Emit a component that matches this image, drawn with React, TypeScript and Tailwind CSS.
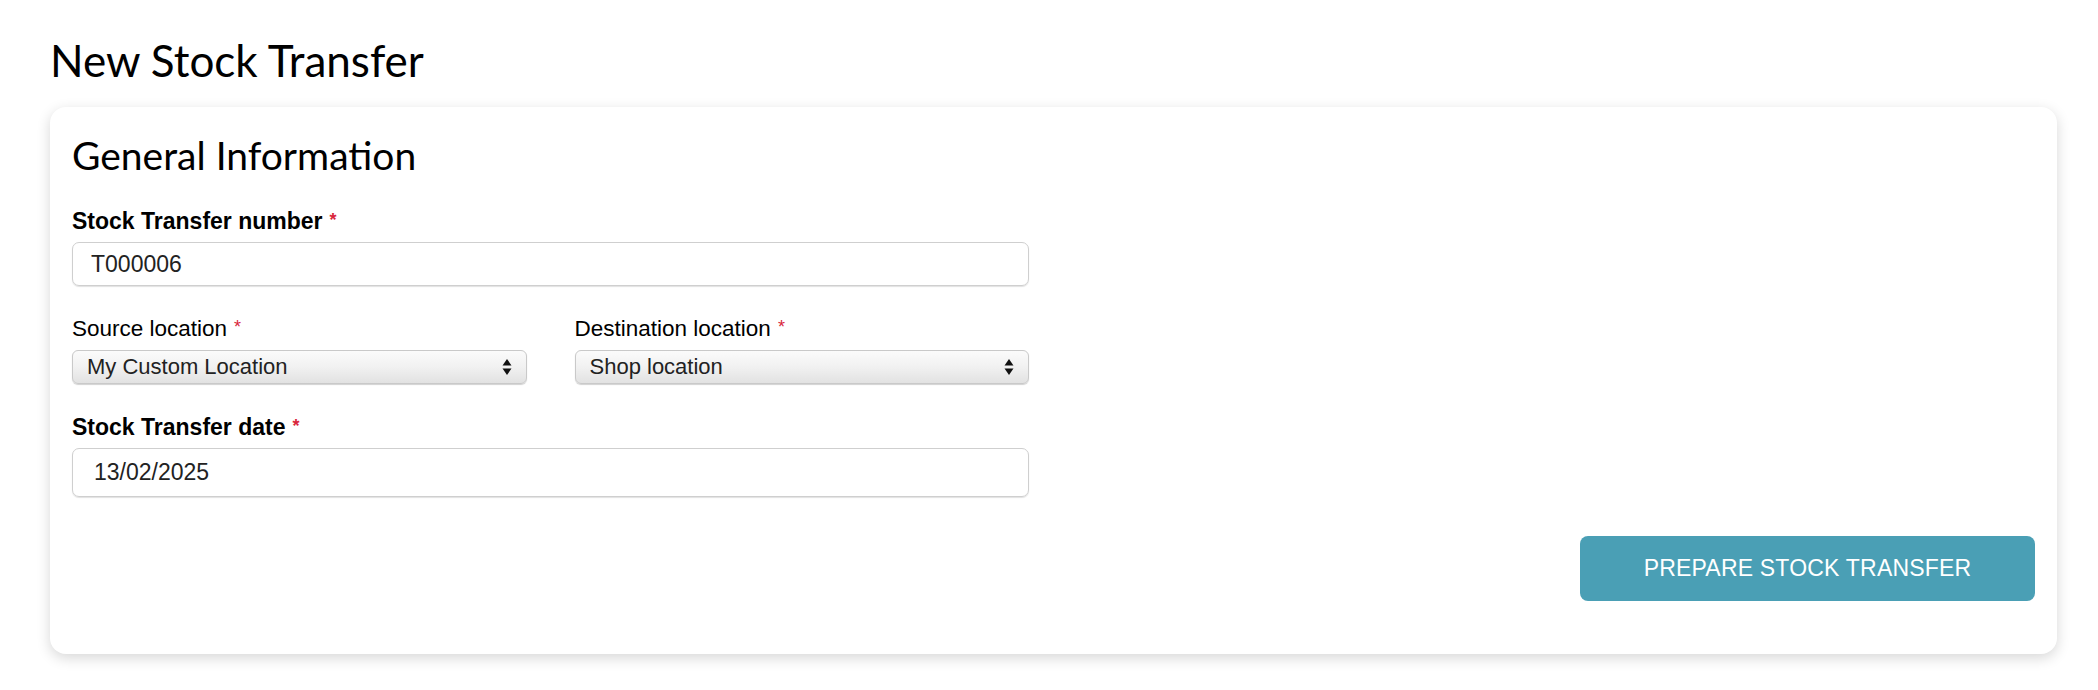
import React, { useState } from 'react';

const Req = () => <span className="text-[#d9263b] text-[18px] ml-[7px] align-[3px]">*</span>;

const Select = ({ value }: { value: string }) => {
  return (
    <div className="relative h-[34px] flex items-center rounded-[6px] border border-[#c9c9c9] bg-gradient-to-b from-[#fbfbfb] via-[#f1f1f1] to-[#e2e2e2] shadow-[0_1px_1px_rgba(0,0,0,0.18)] pl-[14px] pr-[14px]">
      <span className="flex-1 text-[22px] text-[#222] leading-none">{value}</span>
      <svg width="10" height="20" viewBox="0 0 10 20" className="shrink-0">
        <path d="M5 2 L9.5 8.5 L0.5 8.5 Z" fill="#111" />
        <path d="M5 18 L9.5 11.5 L0.5 11.5 Z" fill="#111" />
      </svg>
    </div>
  );
};

const NewStockTransfer = () => {
  const [number, setNumber] = useState('T000006');
  const [date, setDate] = useState('13/02/2025');

  return (
    <div className="min-h-[690px] bg-white pl-[50px] pr-[41px] pt-[36px] font-['Liberation_Sans',Arial,sans-serif]">
      <h1 className="font-['Lato',sans-serif] text-[44px] leading-[48px] text-black mb-[23px]">
        New Stock Transfer
      </h1>

      <div className="rounded-[16px] bg-white shadow-[0_4px_14px_rgba(0,0,0,0.16)] px-[22px] pt-[25px] pb-[53px]">
        <h2 className="font-['Lato',sans-serif] text-[39px] leading-[46px] text-black mb-[29px]">
          General Information
        </h2>

        <div className="w-[957px]">
          <label className="block text-[23px] font-bold text-black leading-[26px] mb-[8px]">
            Stock Transfer number<Req />
          </label>
          <input
            value={number}
            onChange={e => setNumber(e.target.value)}
            className="w-full h-[44px] rounded-[7px] border border-[#cfcfcf] shadow-[0_1px_1px_rgba(0,0,0,0.12)] px-[18px] text-[23px] text-[#222] outline-none"
          />

          <div className="grid grid-cols-2 gap-[48px] mt-[28px]">
            <div>
              <label className="block text-[22.5px] text-black leading-[26px] mb-[8px]">
                Source location<Req />
              </label>
              <Select value="My Custom Location" />
            </div>
            <div>
              <label className="block text-[22.5px] text-black leading-[26px] mb-[8px]">
                Destination location<Req />
              </label>
              <Select value="Shop location" />
            </div>
          </div>

          <label className="block text-[23px] font-bold text-black leading-[26px] mt-[29px] mb-[8px]">
            Stock Transfer date<Req />
          </label>
          <input
            value={date}
            onChange={e => setDate(e.target.value)}
            className="w-full h-[49px] rounded-[7px] border border-[#cfcfcf] shadow-[0_1px_1px_rgba(0,0,0,0.12)] px-[21px] text-[23px] text-[#222] outline-none"
          />
        </div>

        <div className="flex justify-end mt-[39px]">
          <button className="w-[455px] h-[65px] rounded-[8px] bg-[#4a9fb5] text-white text-[23px] tracking-[0.2px]">
            PREPARE STOCK TRANSFER
          </button>
        </div>
      </div>
    </div>
  );
};

export default function App() {
  return <NewStockTransfer />;
}
